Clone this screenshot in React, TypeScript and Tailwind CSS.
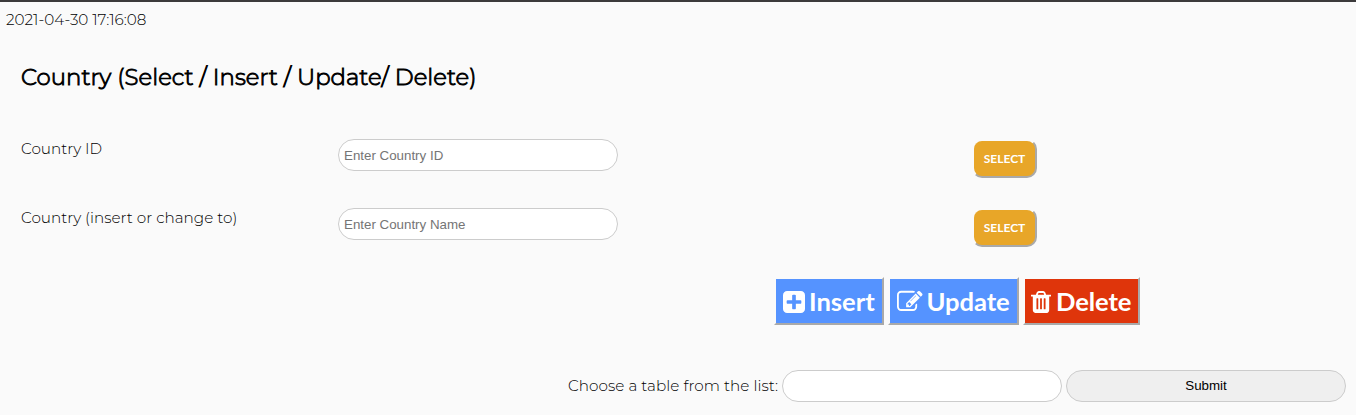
import type { ReactNode } from 'react';

const label = "font-['Montserrat','Inter',sans-serif] font-light text-black whitespace-nowrap";
const field =
  "box-border h-8 w-[280px] rounded-[16px] border border-[#ccc] bg-white px-[5px] font-['Liberation_Sans',sans-serif] text-[13.333px] text-black placeholder:text-[#757575] outline-none";
const bevel = 'border-2 border-t-[#fafafa] border-l-[#fafafa] border-r-[#a9a9a9] border-b-[#a9a9a9]';

function SelectButton() {
  return (
    <button
      type="button"
      className={`h-[39px] w-[65px] rounded-[10px] bg-[#e8a628] pt-px font-['Lato',sans-serif] text-[12px] font-bold text-white ${bevel}`}
    >
      SELECT
    </button>
  );
}

function Action({ children, tone }: { children: ReactNode; tone: string }) {
  return (
    <button
      type="button"
      className={`flex h-[48px] items-center whitespace-nowrap pt-px pl-[7px] font-['Lato',sans-serif] text-[25.6px] leading-none font-bold text-white ${bevel} ${tone}`}
    >
      {children}
    </button>
  );
}

function Row({ name, placeholder }: { name: string; placeholder: string }) {
  return (
    <div className="flex h-[69px] items-start pl-[21px]">
      <div className={`w-[317px] text-[15.2px] leading-5 tracking-[0.02px] ${label}`}>{name}</div>
      <input className={field} placeholder={placeholder} />
      <div className="ml-[354px]">
        <SelectButton />
      </div>
    </div>
  );
}

export default function App() {
  return (
    <div className="h-[415px] w-[1356px] overflow-hidden border-t-2 border-[#3c3a3b] bg-[#fafafa]">
      <div className={`ml-[6px] pt-2 text-[15.2px] leading-5 ${label}`}>2021-04-30 17:16:08</div>
      <h1
        className={`mt-[31px] ml-[21px] h-8 text-[22.8px] leading-8 tracking-[0.03px] [-webkit-text-stroke:0.9px_black] ${label}`}
      >
        Country (Select / Insert / Update/ Delete)
      </h1>
      <div className="mt-[46px]">
        <Row name="Country ID" placeholder="Enter Country ID" />
        <Row name="Country (insert or change to)" placeholder="Enter Country Name" />
      </div>
      <div className="ml-[774px] flex gap-[4px]">
        <Action tone="w-[110px] bg-[#5593ff]">
          <svg className="mr-[4px] h-[22px] w-[22px] shrink-0" viewBox="128 128 1536 1536" fill="currentColor">
            <path d="M1408 960v-128q0-26-19-45t-45-19h-320v-320q0-26-19-45t-45-19h-128q-26 0-45 19t-19 45v320h-320q-26 0-45 19t-19 45v128q0 26 19 45t45 19h320v320q0 26 19 45t45 19h128q26 0 45-19t19-45v-320h320q26 0 45-19t19-45zm256-544v960q0 119-84.5 203.5t-203.5 84.5h-960q-119 0-203.5-84.5t-84.5-203.5v-960q0-119 84.5-203.5t203.5-84.5h960q119 0 203.5 84.5t84.5 203.5z" />
          </svg>
          Insert
        </Action>
        <Action tone="w-[131px] bg-[#5593ff]">
          <svg className="mr-[4px] h-[25.6px] w-[25.6px] shrink-0" viewBox="0 0 1792 1792" fill="currentColor">
            <path d="M888 1184l116-116-152-152-116 116v56h96v96h56zm440-720q-16-16-33 1l-350 350q-17 17-1 33t33-1l350-350q17-17 1-33zm80 594v190q0 119-84.5 203.5t-203.5 84.5h-832q-119 0-203.5-84.5t-84.5-203.5v-832q0-119 84.5-203.5t203.5-84.5h832q63 0 117 25 15 7 18 23 3 17-9 29l-49 49q-14 14-32 8-23-6-45-6h-832q-66 0-113 47t-47 113v832q0 66 47 113t113 47h832q66 0 113-47t47-113v-126q0-13 9-22l64-64q15-15 35-7t20 29zm-96-738l288 288-672 672h-288v-288zm444 132l-92 92-288-288 92-92q28-28 68-28t68 28l152 152q28 28 28 68t-28 68z" />
          </svg>
          <span className="tracking-[-0.1px]">Update</span>
        </Action>
        <Action tone="w-[117px] bg-[#df350b]">
          <svg className="-ml-px mr-[5px] h-[22px] w-[20px] shrink-0" viewBox="192 128 1408 1536" fill="currentColor">
            <path d="M704 1376v-704q0-14-9-23t-23-9h-64q-14 0-23 9t-9 23v704q0 14 9 23t23 9h64q14 0 23-9t9-23zm256 0v-704q0-14-9-23t-23-9h-64q-14 0-23 9t-9 23v704q0 14 9 23t23 9h64q14 0 23-9t9-23zm256 0v-704q0-14-9-23t-23-9h-64q-14 0-23 9t-9 23v704q0 14 9 23t23 9h64q14 0 23-9t9-23zm-544-992h448l-48-117q-7-9-17-11h-317q-10 2-17 11zm928 32v64q0 14-9 23t-23 9h-96v948q0 83-47 143.5t-113 60.5h-832q-66 0-113-58.5t-47-141.5v-952h-96q-14 0-23-9t-9-23v-64q0-14 9-23t23-9h309l70-167q15-37 54-63t79-26h320q40 0 79 26t54 63l70 167h309q14 0 23 9t9 23z" />
          </svg>
          <span className="tracking-[-0.1px]">Delete</span>
        </Action>
      </div>
      <div className="mt-[45px] flex items-center pl-[568px]">
        <span className={`w-[214px] text-[15.2px] leading-5 tracking-[0.06px] ${label}`}>
          Choose a table from the list:
        </span>
        <input className={field} />
        <button
          type="button"
          className="ml-1 h-8 w-[280px] rounded-[16px] border border-[#ccc] bg-[#efefef] font-['Liberation_Sans',sans-serif] text-[13.333px] text-black"
        >
          Submit
        </button>
      </div>
    </div>
  );
}
